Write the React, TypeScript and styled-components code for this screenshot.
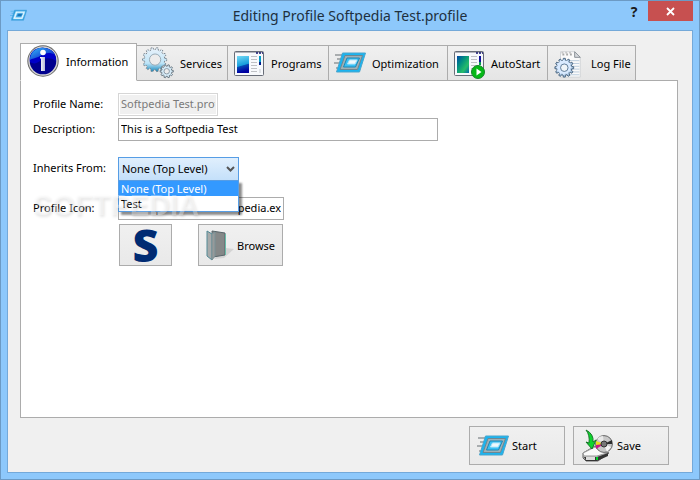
import React, { useId, useState } from 'react';
import styled, { createGlobalStyle } from 'styled-components';

const GlobalStyle = createGlobalStyle`
  * { box-sizing: border-box; }
  body { margin: 0; }
  body, button, input, select {
    font-family: 'Noto Sans', 'Open Sans', sans-serif;
    font-size: 11px;
    color: #000;
  }
`;

const Frame = styled.div`
  display: flex;
  flex-direction: column;
  min-height: 100vh;
  padding: 0 6px 6px;
  border: 1px solid #6c9ac4;
  background: #8dc8fb;
`;

const TitleBar = styled.header`
  display: grid;
  grid-template-columns: 80px 1fr 80px;
  align-items: center;
  height: 29px;
`;

const TitleIcon = styled.span`
  display: flex;
  padding: 0 3px;
`;

const Title = styled.h1`
  margin: 0;
  font-size: 14px;
  font-weight: 400;
  line-height: 20px;
  text-align: center;
  color: #20303e;
`;

const Caption = styled.div`
  display: flex;
  justify-content: flex-end;
  align-self: start;
`;

const CaptionButton = styled.button<{ $close?: boolean }>`
  display: flex;
  align-items: center;
  justify-content: center;
  width: ${(p) => (p.$close ? 45 : 28)}px;
  height: 20px;
  padding: 0;
  border: 0;
  font-size: 14px;
  font-weight: 700;
  color: ${(p) => (p.$close ? '#fff' : '#1a1a1a')};
  background: ${(p) => (p.$close ? '#c75050' : 'transparent')};
`;

const Client = styled.main`
  display: flex;
  flex: 1;
  flex-direction: column;
  padding: 12px 14px 7px 12px;
  border: 1px solid #74a9d9;
  background: #f0f0f0;
`;

const TabList = styled.div`
  display: flex;
  align-items: flex-end;
  position: relative;
  z-index: 1;
  margin-bottom: -1px;
`;

const Tab = styled.button<{ $width: number; $active: boolean }>`
  display: flex;
  align-items: center;
  gap: 6px;
  flex: 0 1 ${(p) => p.$width}px;
  height: ${(p) => (p.$active ? 38 : 36)}px;
  padding: 0 4px ${(p) => (p.$active ? 2 : 0)}px 5px;
  border: 1px solid #acacac;
  border-left-width: ${(p) => (p.$active ? 1 : 0)}px;
  border-bottom-color: ${(p) => (p.$active ? '#fff' : '#acacac')};
  background: ${(p) => (p.$active ? '#fff' : 'linear-gradient(#f0f0f0, #e5e5e5)')};
  white-space: nowrap;
  svg { flex: none; }
`;

const Panel = styled.section`
  flex: 1;
  position: relative;
  padding: 12px;
  border: 1px solid #acacac;
  background: #fff;
`;

const Row = styled.div<{ $space?: number }>`
  display: flex;
  align-items: center;
  margin-bottom: ${(p) => p.$space ?? 2}px;
`;

const Label = styled.label`
  flex: 0 0 85px;
  padding-bottom: 2px;
  line-height: 16px;
`;

const TextBox = styled.input<{ $width: number }>`
  flex: 0 1 ${(p) => p.$width}px;
  width: ${(p) => p.$width}px;
  height: 23px;
  padding: 0 2px 2px;
  border: 1px solid #acacac;
  background: #fff;
  &:disabled {
    border-color: #d6d6d6;
    color: #7a7a7a;
    background: #f0f0f0;
    box-shadow: inset 0 0 0 1px #fff;
  }
`;

const Combo = styled.div`
  display: grid;
  align-items: center;
  position: relative;
  width: 121px;
  svg {
    grid-area: 1 / 1;
    justify-self: end;
    margin-right: 4px;
    pointer-events: none;
  }
`;

const Select = styled.select`
  grid-area: 1 / 1;
  width: 100%;
  height: 24px;
  padding: 0 3px 2px;
  border: 1px solid #569de5;
  border-radius: 0;
  appearance: none;
  outline: 0;
  background: linear-gradient(#e0effd, #c4e0fa);
`;

const Options = styled.ul`
  position: absolute;
  z-index: 1;
  top: 100%;
  left: 0;
  right: 0;
  margin: -1px 0 0;
  padding: 0;
  border: 1px solid #569de5;
  background: #fff;
  box-shadow: 3px 3px 2px rgba(0, 0, 0, 0.45);
  list-style: none;
`;

const Option = styled.li<{ $selected: boolean }>`
  height: 15px;
  padding: 0 2px;
  line-height: 15px;
  color: ${(p) => (p.$selected ? '#fff' : '#000')};
  background: ${(p) => (p.$selected ? '#3399ff' : '#fff')};
`;

const IconButtons = styled.div`
  display: flex;
  gap: 26px;
  margin-left: 86px;
`;

const PushButton = styled.button<{ $width: number; $tall?: boolean }>`
  display: flex;
  align-items: center;
  gap: 3px;
  width: ${(p) => p.$width}px;
  height: ${(p) => (p.$tall ? 42 : 39)}px;
  padding: 0 7px;
  border: 1px solid #acacac;
  background: linear-gradient(#f0f0f0, #e9e9e9);
  svg { flex: none; }
`;

const LogoLetter = styled.span`
  flex: 1;
  font: 800 45px/40px 'Open Sans', sans-serif;
  text-align: center;
  color: #002b73;
`;

const Footer = styled.footer`
  display: flex;
  justify-content: flex-end;
  gap: 8px;
  padding: 8px 9px 0 0;
`;

const Watermark = styled.span`
  position: absolute;
  z-index: 2;
  top: 106px;
  left: 12px;
  font: 700 29px/36px 'Liberation Sans', sans-serif;
  color: rgba(255, 255, 255, 0.35);
  text-shadow: 1px 2px 3px rgba(0, 0, 0, 0.1);
  pointer-events: none;
`;

function gearPath(cx: number, cy: number, r: number, teeth: number, depth: number) {
  const points: string[] = [];
  const step = (Math.PI * 2) / teeth;
  for (let i = 0; i < teeth; i++) {
    [[-0.3, -depth], [-0.2, 0], [0.2, 0], [0.3, -depth]].forEach(([offset, d]) => {
      const a = (i + offset) * step;
      points.push(`${(cx + Math.cos(a) * (r + d)).toFixed(2)} ${(cy + Math.sin(a) * (r + d)).toFixed(2)}`);
    });
  }
  return `M${points.join('L')}Z`;
}

function InfoIcon() {
  return (
    <svg width="34" height="34" viewBox="0 0 34 34" aria-hidden="true">
      <defs>
        <linearGradient id="info-shine" x1="0" y1="0" x2="1" y2="1">
          <stop offset="0" stopColor="#36bdfa" /><stop offset="1" stopColor="#0000bd" />
        </linearGradient>
        <linearGradient id="info-stem" x1="0" x2="1">
          <stop offset="0" stopColor="#fff" /><stop offset="1" stopColor="#b4b9d8" />
        </linearGradient>
      </defs>
      <circle cx="17" cy="17" r="15.7" fill="#666" />
      <circle cx="17" cy="17" r="14.7" fill="#d4d4d4" />
      <circle cx="17" cy="17" r="13.3" fill="#00008e" />
      <path d="M4 18C2 8 10 3 18 4C26 4 31 11 30 17C24 13 18 14 14 17C10 20 7 20 4 18Z" fill="#0000c8" />
      <path d="M4 16C4 8 11 3 18 4C24 4 28 8 29 11C23 7 17 10 14 12C9 15 6 14 4 16Z" fill="url(#info-shine)" />
      <circle cx="17" cy="8.5" r="2.8" fill="#fff" />
      <path d="M14 13H19V27H15V15L14 14Z" fill="url(#info-stem)" />
    </svg>
  );
}

function GearsIcon() {
  return (
    <svg width="32" height="32" viewBox="0 0 33 33" aria-hidden="true">
      <defs>
        <linearGradient id="gears" x1="0" y1="0" x2="0" y2="1">
          <stop offset="0" stopColor="#eaf2fa" /><stop offset=".65" stopColor="#bfe5f8" /><stop offset="1" stopColor="#1689bd" />
        </linearGradient>
      </defs>
      <path d={gearPath(13, 13, 12.5, 14, 2)} fill="url(#gears)" stroke="#6e7a84" strokeWidth=".9" strokeDasharray="2 1" />
      <circle cx="13.5" cy="13" r="5.8" fill="#ececec" stroke="#98a8b4" />
      <path d={gearPath(25.5, 25, 6.8, 10, 1.5)} fill="#d5eaf6" stroke="#5f6d78" strokeWidth=".9" />
      <circle cx="25.5" cy="25" r="2.8" fill="#ececec" stroke="#8b9ba7" />
    </svg>
  );
}

function WindowIcon({ run }: { run?: boolean }) {
  const id = useId();
  return (
    <svg width="32" height="32" viewBox="0 0 32 32" aria-hidden="true">
      <defs>
        <linearGradient id={id} x1="0" y1="0" x2={run ? '1' : '0.2'} y2="1">
          <stop offset="0" stopColor={run ? '#0045a8' : '#72d9f5'} />
          <stop offset={run ? '.35' : '.6'} stopColor={run ? '#008d81' : '#159cdb'} />
          <stop offset={run ? '.7' : '.65'} stopColor={run ? '#26bd69' : '#0647b4'} />
          <stop offset="1" stopColor={run ? '#0065af' : '#0000a2'} />
        </linearGradient>
      </defs>
      <rect x="1.5" y="4.5" width="29" height="24" rx="1" fill="#f7f9fc" stroke="#686d78" />
      <path d="M2 5.5H30" stroke="#b3b6bd" />
      <path d="M23 6H25M26 6H28M29 6H30" stroke="#10126c" strokeWidth="1.5" />
      <rect x="4" y="9" width="12" height="17" fill={`url(#${id})`} />
      <path d="M18 9.5H24M18 12.5H24M18 15.5H24M18 18.5H24M18 21.5H24M18 24.5H24" stroke="#bec0c4" />
      <path d="M27 9V18" stroke={run ? '#10129b' : '#079cc7'} strokeWidth="2" />
      <path d="M27 15V18" stroke={run ? '#059a51' : '#001d8a'} strokeWidth="2" />
      <path d="M26 22H28V26H26Z" fill="#dfe2e6" />
      {run && <>
        <circle cx="25" cy="25" r="6.5" fill="#05b816" stroke="#15862a" />
        <path d="M23.5 21.5L28.5 25L23.5 28.5Z" fill="#fff" />
      </>}
    </svg>
  );
}

function ChipIcon({ size = 32, light }: { size?: number; light?: boolean }) {
  return (
    <svg width={size} height={size} viewBox="0 0 32 32" aria-hidden="true">
      <path d="M1 8H10M3 12H9M0 16H8M2 21H7" stroke={light ? '#5fbaf0' : '#a9adaf'} strokeWidth="2" />
      <path d="M8.5 6H31.5L25.5 25H2.5Z" fill={light ? '#2b9ddc' : '#1ab4f0'} stroke={light ? '#439fd9' : '#4aa5cc'} />
      <path d="M11 8.5H28.5L23.5 22.5H6Z" fill={light ? '#e8f8ff' : '#9fb0b6'} stroke={light ? '#9edcfb' : '#6d8792'} />
      <path d="M13 11H25.5L21.5 20H9.5Z" fill={light ? '#47aee8' : '#38c0f5'} stroke={light ? '#e8f8ff' : '#1f87b4'} />
      <path d="M15.5 13H23L21 17H13.5Z" fill={light ? '#126eb2' : '#eef9fd'} stroke={light ? '#2f8fce' : '#b6e5f8'} />
    </svg>
  );
}

function LogIcon() {
  return (
    <svg width="32" height="32" viewBox="0 0 32 34" aria-hidden="true">
      <path d="M7 5H22L28 11V32H7Z" fill="#fafafa" stroke="#d0d3d6" />
      <path d="M8 6H20" stroke="#c6c6c6" strokeWidth="2" strokeDasharray="2 2" />
      <path d="M9 8H20" stroke="#a8a8a8" strokeWidth="2" strokeDasharray="2 2" />
      <path d="M22 5V11H28Z" fill="#d5d8dc" stroke="#888e94" />
      <path d="M8 14.5H27M8 17.5H27M8 20.5H27M8 23.5H27M8 26.5H27M8 29.5H27" stroke="#b9cbdc" />
      <path d={gearPath(11, 22, 10, 12, 2)} fill="#a7c3df" stroke="#47627d" />
      <path d={gearPath(10.5, 21.5, 8, 12, 1)} fill="#d9eaff" />
      <circle cx="11" cy="22" r="4" fill="#eff4f8" stroke="#5b7894" />
    </svg>
  );
}

function FolderIcon() {
  return (
    <svg width="28" height="34" viewBox="0 0 28 34" aria-hidden="true">
      <path d="M18 30L28 21L20 20L8 31Z" fill="#d4d4d4" />
      <path d="M6 3L19 5V27L7 29Z" fill="#858888" stroke="#58656a" />
      <path d="M1 3L6 6V32L1 28Z" fill="#a8aaaa" stroke="#528a96" />
      <path d="M6 6L9 4V28L6 32Z" fill="#979a9a" stroke="#7b9196" />
      <path d="M19.5 6V27" stroke="#69bdaa" />
    </svg>
  );
}

function SaveIcon() {
  return (
    <svg width="33" height="34" viewBox="0 0 33 34" aria-hidden="true">
      <path d="M2 24L14 17L28 24L17 32H5L2 29Z" fill="#c5c5c5" stroke="#626262" />
      <path d="M2 24L14 18L26 24L16 27H3Z" fill="#fafafa" stroke="#999" />
      <path d="M3 28H16L27 24V27L16 32H5Z" fill="#343434" />
      <path d="M5 28H14V31H5Z" fill="#ddd" />
      <path d="M16 28V31" stroke="#00cf28" strokeWidth="2" />
      <circle cx="23" cy="15" r="8.4" fill="#c8c8c8" stroke="#666" />
      <path d="M23 15L16 10Q18 7 22 7Z" fill="#e8e8e8" />
      <path d="M23 15L15 12V17Z" fill="#e8e01b" />
      <path d="M23 15L15 16V20Z" fill="#c9168a" />
      <path d="M23 15L31 11V15Z" fill="#2d2d2d" />
      <path d="M23 15L30 18L26 23Z" fill="#f5f5f5" />
      <circle cx="23" cy="15" r="3" fill="#777" stroke="#333" />
      <path d="M5 1Q13 5 12 13L15 11L11 20L5 13L8 14Q9 6 5 1Z" fill="#0ed42d" stroke="#18772a" />
    </svg>
  );
}

const tabs = [
  { name: 'Information', width: 117, icon: <InfoIcon /> },
  { name: 'Services', width: 91, icon: <GearsIcon /> },
  { name: 'Programs', width: 101, icon: <WindowIcon /> },
  { name: 'Optimization', width: 119, icon: <ChipIcon /> },
  { name: 'AutoStart', width: 100, icon: <WindowIcon run /> },
  { name: 'Log File', width: 88, icon: <LogIcon /> },
];

const parents = ['None (Top Level)', 'Test'];

export default function App() {
  const [tab, setTab] = useState('Information');
  const [parent, setParent] = useState(parents[0]);
  return (
    <>
      <GlobalStyle />
      <Frame>
        <TitleBar>
          <TitleIcon><ChipIcon size={17} light /></TitleIcon>
          <Title>Editing Profile Softpedia Test.profile</Title>
          <Caption>
            <CaptionButton aria-label="Help">?</CaptionButton>
            <CaptionButton $close aria-label="Close">
              <svg width="9" height="9" viewBox="0 0 9 9"><path d="M1 1L8 8M8 1L1 8" stroke="#fff" strokeWidth="1.8" /></svg>
            </CaptionButton>
          </Caption>
        </TitleBar>
        <Client>
          <TabList role="tablist">
            {tabs.map((t) => (
              <Tab key={t.name} role="tab" aria-selected={t.name === tab} $active={t.name === tab} $width={t.width} onClick={() => setTab(t.name)}>
                {t.icon}{t.name}
              </Tab>
            ))}
          </TabList>
          <Panel role="tabpanel">
            <Row>
              <Label htmlFor="name">Profile Name:</Label>
              <TextBox id="name" $width={100} disabled defaultValue="Softpedia Test.profile" />
            </Row>
            <Row $space={16}>
              <Label htmlFor="description">Description:</Label>
              <TextBox id="description" $width={320} defaultValue="This is a Softpedia Test" />
            </Row>
            <Row $space={16}>
              <Label htmlFor="parent">Inherits From:</Label>
              <Combo>
                <Select id="parent" value={parent} onChange={(e) => setParent(e.target.value)}>
                  {parents.map((p) => <option key={p}>{p}</option>)}
                </Select>
                <svg width="9" height="7" viewBox="0 0 9 7"><path d="M1 1L4.5 4.5L8 1" fill="none" stroke="#555" strokeWidth="2" /></svg>
                <Options role="listbox" aria-label="Inherits From">
                  {parents.map((p) => (
                    <Option key={p} role="option" aria-selected={p === parent} $selected={p === parent} onClick={() => setParent(p)}>{p}</Option>
                  ))}
                </Options>
              </Combo>
            </Row>
            <Row $space={4}>
              <Label htmlFor="icon">Profile Icon:</Label>
              <TextBox id="icon" $width={166} defaultValue="C:/Softpedia Tests/Softpedia.exe" />
            </Row>
            <IconButtons>
              <PushButton $width={53} $tall aria-label="Profile icon"><LogoLetter>S</LogoLetter></PushButton>
              <PushButton $width={85} $tall><FolderIcon />Browse</PushButton>
            </IconButtons>
            <Watermark aria-hidden="true">SOFTPEDIA</Watermark>
          </Panel>
          <Footer>
            <PushButton $width={96}><ChipIcon />Start</PushButton>
            <PushButton $width={96}><SaveIcon />Save</PushButton>
          </Footer>
        </Client>
      </Frame>
    </>
  );
}
